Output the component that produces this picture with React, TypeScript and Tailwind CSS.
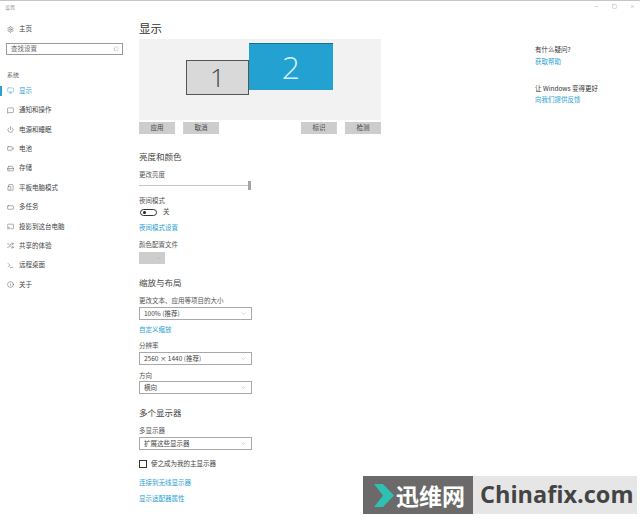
import React from "react";
import {
  Battery, Cast, ChevronDown, HardDrive, Info, Minus, Monitor, MessageSquare, Power, RectangleHorizontal, Search, Settings, Shuffle, Square, TabletSmartphone, Terminal, X,
} from "lucide-react";

const FONT = "font-['Noto_Sans_CJK_SC','Noto_Sans',sans-serif]";

const navItems = [
  { label: "显示", icon: Monitor, active: true },
  { label: "通知和操作", icon: MessageSquare },
  { label: "电源和睡眠", icon: Power },
  { label: "电池", icon: Battery },
  { label: "存储", icon: HardDrive },
  { label: "平板电脑模式", icon: TabletSmartphone },
  { label: "多任务", icon: RectangleHorizontal },
  { label: "投影到这台电脑", icon: Cast },
  { label: "共享的体验", icon: Shuffle },
  { label: "远程桌面", icon: Terminal },
  { label: "关于", icon: Info },
];

function Select({ value, className = "" }: { value: string; className?: string }) {
  return (
    <div className={`flex h-[13px] w-[113px] items-center justify-between border border-[#a8a8a8] bg-white pl-[4px] pr-[4px] text-[6.5px] text-[#444] ${className}`}>
      <span>{value}</span>
      <ChevronDown className="h-[7px] w-[7px] text-[#999]" strokeWidth={1.5} />
    </div>
  );
}

function Heading({ children, className = "" }: { children: React.ReactNode; className?: string }) {
  return <div className={`h-[12px] text-[8.5px] leading-[12px] text-[#444] ${className}`}>{children}</div>;
}

function Label({ children, className = "" }: { children: React.ReactNode; className?: string }) {
  return <div className={`h-[9px] text-[6.5px] leading-[9px] text-[#555] ${className}`}>{children}</div>;
}

function Link({ children, className = "" }: { children: React.ReactNode; className?: string }) {
  return <div className={`h-[9px] text-[6.5px] leading-[9px] text-[#2a9fd0] ${className}`}>{children}</div>;
}

function Btn({ children, className = "" }: { children: React.ReactNode; className?: string }) {
  return (
    <div className={`flex h-[12px] w-[36px] items-center justify-center bg-[#cdcdcd] text-[6.5px] text-[#444] ${className}`}>
      {children}
    </div>
  );
}

export default function App() {
  return (
    <div className={`relative flex h-[520px] w-[640px] flex-col overflow-hidden bg-white ${FONT}`}>
      {/* title bar */}
      <div className="h-[1px] bg-[#c4c4c4]" />
      <div className="flex h-[11px] items-center justify-between pl-[5px] pr-[5px]">
        <span className="text-[5px] text-[#999]">设置</span>
        <div className="flex items-center gap-[13px] text-[#888]">
          <Minus className="h-[5px] w-[5px]" strokeWidth={1.5} />
          <Square className="h-[5px] w-[5px]" strokeWidth={1.5} />
          <X className="h-[5px] w-[5px]" strokeWidth={1.5} />
        </div>
      </div>

      <div className="flex flex-1">
        {/* sidebar */}
        <aside className="flex w-[139px] shrink-0 flex-col">
          <div className="mt-[11px] flex h-[12px] items-center gap-[5px] pl-[7px] text-[6.5px] text-[#444]">
            <Settings className="h-[7px] w-[7px]" strokeWidth={1.5} />
            <span>主页</span>
          </div>
          <div className="ml-[6px] mt-[8px] flex h-[12px] w-[117px] items-center justify-between border border-[#9a9a9a] pl-[4px] pr-[3px] text-[6.5px] text-[#666]">
            <span>查找设置</span>
            <Search className="h-[6px] w-[6px] scale-x-[-1] text-[#999]" strokeWidth={1.5} />
          </div>
          <div className="mt-[15px] h-[10px] pl-[7px] text-[6px] leading-[10px] text-[#666]">系统</div>
          <nav className="mt-[1px] flex flex-col">
            {navItems.map((item) => {
              const Icon = item.icon;
              return (
                <div
                  key={item.label}
                  className={`flex h-[19.4px] items-center text-[6.5px] ${item.active ? "text-[#2a9fd0]" : "text-[#444]"}`}
                >
                  <span className={`mr-[5px] h-[10px] w-[2px] ${item.active ? "bg-[#2a9fd0]" : ""}`} />
                  <Icon className="mr-[5px] h-[7px] w-[7px]" strokeWidth={1.5} />
                  <span>{item.label}</span>
                </div>
              );
            })}
          </nav>
        </aside>

        {/* main */}
        <main className="flex w-[242px] shrink-0 flex-col">
          <div className="mt-[9px] h-[15px] text-[11.5px] leading-[15px] text-[#333]">显示</div>
          <div className="relative mt-[3px] h-[81px] bg-[#f2f2f2]">
            <div className="absolute left-[47px] top-[21px] flex h-[35px] w-[63px] items-center justify-center border border-[#555] bg-[#d9d9d9] text-[26px] font-light text-[#444]">
              <span className="font-['Open_Sans',sans-serif] font-light">1</span>
            </div>
            <div className="absolute left-[110px] top-[4px] flex h-[47px] w-[84px] items-center justify-center border-t border-[#1c6f94] bg-[#23a2d2] text-[32px] text-[#d4f2ff]">
              <span className="font-['Open_Sans',sans-serif] font-light">2</span>
            </div>
          </div>
          <div className="mt-[2px] flex">
            <Btn>应用</Btn>
            <Btn className="ml-[8px]">取消</Btn>
            <Btn className="ml-auto">标识</Btn>
            <Btn className="ml-[8px]">检测</Btn>
          </div>

          <Heading className="mt-[16px]">亮度和颜色</Heading>
          <Label className="mt-[8px]">更改亮度</Label>
          <div className="mt-[2px] flex h-[9px] w-[112px] items-center">
            <div className="h-[1px] flex-1 bg-[#c4c4c4]" />
            <div className="h-[9px] w-[3px] bg-[#a5a5a5]" />
          </div>
          <Label className="mt-[6px]">夜间模式</Label>
          <div className="mt-[3px] flex h-[8px] items-center gap-[6px]">
            <div className="ml-[1px] flex h-[7px] w-[17px] items-center rounded-full border border-[#333] pl-[2px]">
              <div className="h-[3px] w-[3px] rounded-full bg-[#222]" />
            </div>
            <span className="text-[6.5px] text-[#444]">关</span>
          </div>
          <Link className="mt-[7px]">夜间模式设置</Link>
          <Label className="mt-[8px]">颜色配置文件</Label>
          <div className="mt-[3px] flex h-[12px] w-[26px] items-center justify-end bg-[#cdcdcd] pr-[3px]">
            <ChevronDown className="h-[6px] w-[6px] text-[#aaa]" strokeWidth={1.5} />
          </div>

          <Heading className="mt-[12px]">缩放与布局</Heading>
          <Label className="mt-[8px]">更改文本、应用等项目的大小</Label>
          <Select value="100% (推荐)" className="mt-[2px]" />
          <Link className="mt-[5px]">自定义缩放</Link>
          <Label className="mt-[7px]">分辨率</Label>
          <Select value="2560 × 1440 (推荐)" className="mt-[2px]" />
          <Label className="mt-[6px]">方向</Label>
          <Select value="横向" className="mt-[1px]" />

          <Heading className="mt-[12px]">多个显示器</Heading>
          <Label className="mt-[8px]">多显示器</Label>
          <Select value="扩展这些显示器" className="mt-[2px]" />
          <div className="mt-[10px] flex h-[8px] items-center gap-[4px] text-[6.5px] text-[#444]">
            <div className="h-[8px] w-[8px] border border-[#333]" />
            <span>使之成为我的主显示器</span>
          </div>
          <Link className="mt-[10px]">连接到无线显示器</Link>
          <Link className="mt-[7px]">显示适配器属性</Link>
        </main>

        {/* related */}
        <section className="ml-[154px] flex flex-col">
          <div className="mt-[33px] h-[9px] text-[6.5px] leading-[9px] text-[#333]">有什么疑问?</div>
          <Link className="mt-[3px]">获取帮助</Link>
          <div className="mt-[18px] h-[9px] whitespace-nowrap text-[6.5px] leading-[9px] text-[#333]">让 Windows 变得更好</div>
          <Link className="mt-[2px] whitespace-nowrap">向我们提供反馈</Link>
        </section>
      </div>

      {/* watermark */}
      <div className="absolute left-[363px] top-[476px] flex h-[38px] w-[274px] items-stretch">
        <div className="flex w-[110px] items-center gap-[1px] bg-[#6b6969] pl-[10px]">
          <svg width="22" height="25" viewBox="0 0 22 25">
            <path d="M1 1 H10 L21 12.5 L10 24 H1 L10 12.5 Z" fill="#2fc0b4" />
          </svg>
          <span className="whitespace-nowrap text-[23px] font-bold leading-none text-white">迅维网</span>
        </div>
        <div className="flex flex-1 items-center bg-[#e6e6e6] pl-[7px]">
          <span className="whitespace-nowrap font-['Open_Sans',sans-serif] text-[23.5px] font-bold leading-none text-[#444]">Chinafix.com</span>
        </div>
      </div>
    </div>
  );
}
